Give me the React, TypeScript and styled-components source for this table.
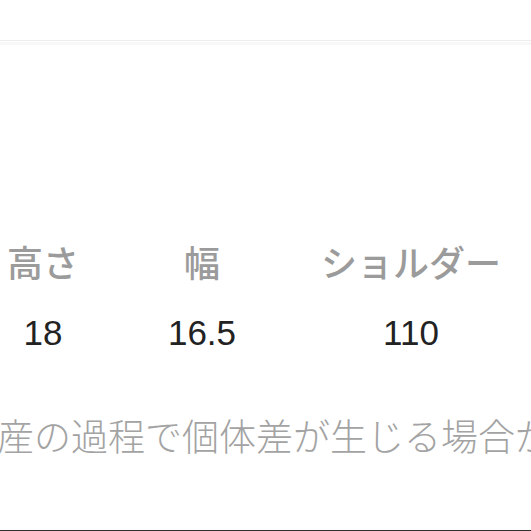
import styled, { createGlobalStyle } from "styled-components";

const GlobalStyle = createGlobalStyle`
  html, body {
    margin: 0;
    padding: 0;
    background: #ffffff;
  }
  body {
    font-family: "Noto Sans CJK JP", "Noto Sans", sans-serif;
    overflow: hidden;
  }
`;

const sizes = [
  { label: "高さ", value: "18" },
  { label: "幅", value: "16.5" },
  { label: "ショルダー", value: "110" },
];

export default function App() {
  return (
    <>
      <GlobalStyle />
      <Page>
        <TopBar />
        <Band />
        <SizeTable>
          {sizes.map((s) => (
            <HeaderCell key={s.label}>{s.label}</HeaderCell>
          ))}
          {sizes.map((s) => (
            <ValueCell key={s.value}>{s.value}</ValueCell>
          ))}
        </SizeTable>
        <Note>産の過程で個体差が生じる場合があります。</Note>
      </Page>
    </>
  );
}

const Page = styled.div`
  display: flex;
  flex-direction: column;
  width: 531px;
  height: 531px;
  box-sizing: border-box;
  border-bottom: 1px solid #2e2e2e;
  overflow: hidden;
`;

const TopBar = styled.div`
  height: 40px;
  border-bottom: 1px solid #ededed;
  flex-shrink: 0;
`;

const Band = styled.div`
  height: 3px;
  margin-top: 1px;
  background: #f7f7f7;
  flex-shrink: 0;
`;

const SizeTable = styled.div`
  display: grid;
  grid-template-columns: 86px 232px 186px;
  row-gap: 30px;
  margin-top: 195px;
`;

const HeaderCell = styled.div`
  text-align: center;
  white-space: nowrap;
  font-size: 36px;
  line-height: 42px;
  font-weight: 500;
  color: #9b9b9b;
`;

const ValueCell = styled.div`
  text-align: center;
  font-family: "Liberation Sans", Arial, sans-serif;
  font-size: 35px;
  line-height: 42px;
  color: #222222;
`;

const Note = styled.div`
  margin-top: 59px;
  margin-left: -3px;
  white-space: nowrap;
  font-size: 37px;
  line-height: 44px;
  font-weight: 300;
  color: #a3a3a3;
`;
